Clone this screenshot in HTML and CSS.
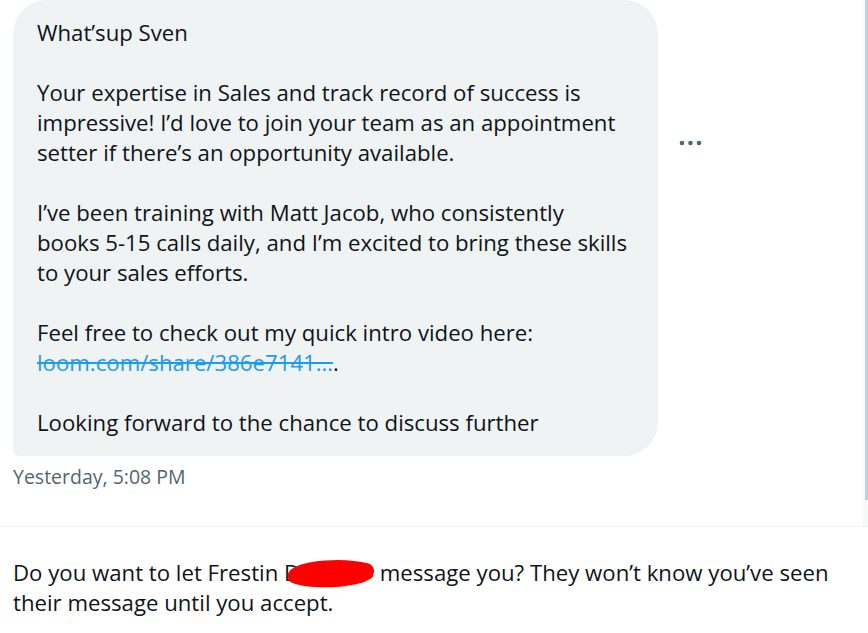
FILE: index.html
```html
<!DOCTYPE html>
<html>
<head>
<meta charset="utf-8">
<link rel="stylesheet" href="styles.css">
</head>
<body>
<div class="page">
  <div class="top">
    <div class="messages">
      <div class="row">
        <div class="bubble">
          <p>What’sup Sven</p>
          <p>Your expertise in Sales and track record of success is<br>impressive! I’d love to join your team as an appointment<br>setter if there’s an opportunity available.</p>
          <p>I’ve been training with Matt Jacob, who consistently<br>books 5-15 calls daily, and I’m excited to bring these skills<br>to your sales efforts.</p>
          <p>Feel free to check out my quick intro video here:<br><a class="link">loom.com/share/386e7141…</a>.</p>
          <p>Looking forward to the chance to discuss further</p>
        </div>
        <div class="more">
          <svg width="24" height="8" viewBox="0 0 24 8"><circle cx="3" cy="4" r="2.3" fill="#536471"/><circle cx="11.5" cy="4" r="2.3" fill="#536471"/><circle cx="20" cy="4" r="2.3" fill="#536471"/></svg>
        </div>
      </div>
      <div class="time">Yesterday, 5:08 PM</div>
    </div>
    <div class="track"><div class="thumb"></div></div>
  </div>
  <div class="bottom">
    <p class="ask">Do you want to let Frestin <span class="redact">D<svg class="scribble" width="92" height="28" viewBox="0 0 92 28"><path d="M8 12 C20 2 60 0 84 6 C92 10 86 20 70 22 C50 26 20 26 8 20 C2 14 10 8 30 8 C55 8 80 10 86 16 C80 22 40 24 12 20" fill="#ff0000" stroke="#ff0000" stroke-width="5" stroke-linecap="round"/></svg></span> message you? They won’t know you’ve seen<br>their message until you accept.</p>
  </div>
</div>
</body>
</html>
```
FILE: styles.css
```css
html, body {
  margin: 0;
  padding: 0;
  background: #ffffff;
}
.page {
  width: 868px;
  height: 633px;
  display: flex;
  flex-direction: column;
  font-family: "Open Sans", "Noto Sans", sans-serif;
  color: #0f1419;
  overflow: hidden;
}
.top {
  height: 526px;
  display: flex;
  flex-direction: row;
}
.messages {
  flex: 1;
  padding-left: 13px;
}
.row {
  display: flex;
  align-items: flex-start;
}
.bubble {
  width: 597px;
  background: #eff3f4;
  border-radius: 34px 34px 34px 6px;
  padding: 18px 24px;
  font-size: 22.2px;
  line-height: 30px;
}
.bubble p {
  margin: 0 0 30px 0;
  white-space: nowrap;
}
.bubble p:last-child {
  margin-bottom: 0;
}
.link {
  color: #1d9bf0;
  text-decoration: line-through;
}
.more {
  width: 42px;
  height: 40px;
  margin-left: 12px;
  margin-top: 123px;
  display: flex;
  align-items: center;
  justify-content: center;
}
.more svg {
  display: block;
}
.time {
  margin-top: 9px;
  font-size: 19.5px;
  line-height: 24px;
  color: #536471;
}
.track {
  width: 5px;
  background: #f7f9f9;
  display: flex;
  justify-content: flex-end;
}
.thumb {
  width: 3px;
  height: 500px;
  background: #c2cfd7;
}
.bottom {
  border-top: 1px solid #eff3f4;
  padding: 31px 13px 0 13px;
}
.ask {
  margin: 0;
  font-size: 22.2px;
  line-height: 30px;
  white-space: nowrap;
}
.redact {
  position: relative;
  display: inline-block;
  width: 90px;
  color: #0f1419;
}
.scribble {
  position: absolute;
  left: 0;
  top: 2px;
}
```
